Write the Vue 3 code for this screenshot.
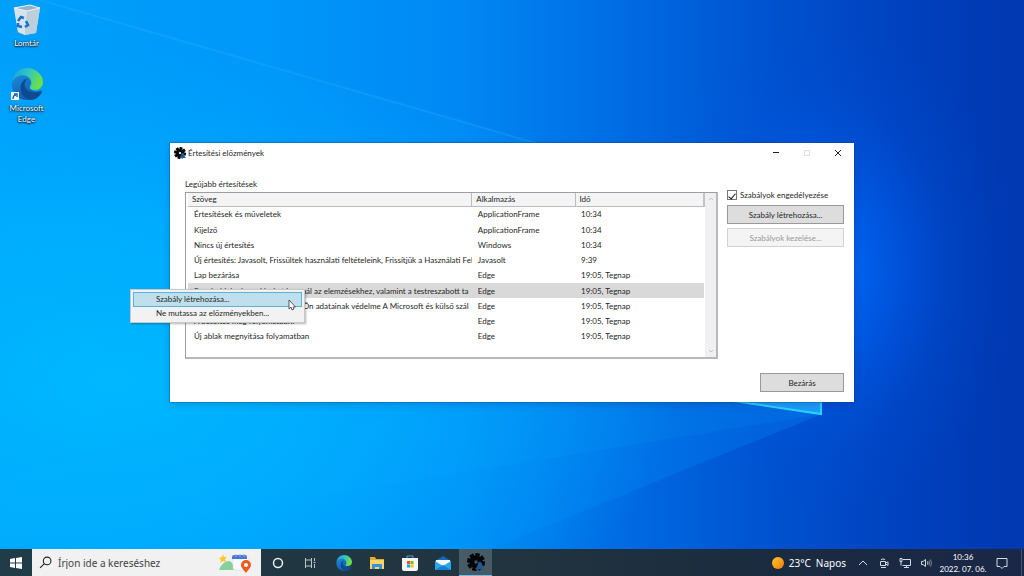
<script setup>
import { ref } from 'vue'

const rows = [
  { text: 'Értesítések és műveletek', app: 'ApplicationFrame', time: '10:34' },
  { text: 'Kijelző', app: 'ApplicationFrame', time: '10:34' },
  { text: 'Nincs új értesítés', app: 'Windows', time: '10:34' },
  { text: 'Új értesítés: Javasolt, Frissültek használati feltételeink, Frissítjük a Használati Fel', app: 'Javasolt', time: '9:39' },
  { text: 'Lap bezárása', app: 'Edge', time: '19:05, Tegnap' },
  { text: 'E weboldalunk cookie-kat használ az elemzésekhez, valamint a testreszabott ta', app: 'Edge', time: '19:05, Tegnap', selected: true },
  { text: 'Számunkra rendkívül fontos az Ön adatainak védelme A Microsoft és külső szál', app: 'Edge', time: '19:05, Tegnap' },
  { text: 'A betöltés még folyamatban.', app: 'Edge', time: '19:05, Tegnap' },
  { text: 'Új ablak megnyitása folyamatban', app: 'Edge', time: '19:05, Tegnap' },
]
const rulesEnabled = ref(true)
const query = ref('')
const teeth = [0, 45, 90, 135, 180, 225, 270, 315]
</script>

<template>
  <div class="screen">
    <svg width="0" height="0" class="defs" aria-hidden="true">
      <defs>
        <linearGradient id="eTeal" x1="0" y1="0" x2="1" y2="0.3">
          <stop offset="0" stop-color="#1a9fe0" />
          <stop offset="0.5" stop-color="#2cc3c8" />
          <stop offset="1" stop-color="#6be04a" />
        </linearGradient>
        <linearGradient id="eBlue" x1="0" y1="0" x2="0.6" y2="1">
          <stop offset="0" stop-color="#1b8fdf" />
          <stop offset="1" stop-color="#1255a8" />
        </linearGradient>
        <symbol id="edge" viewBox="0 0 32 32">
          <path d="M1 15C2 7 8 4 14 6c5 2 7 6 6 9-1 2-2 3-1 5 2 4 8 5 12 2-3 6-9 10-15 10C7 32 0 24 1 15Z" fill="url(#eBlue)" />
          <path d="M10 17c-2 6 2 14 10 15 5 0 9-4 11-8 0-1-1-1-2-1-6 3-13 1-15-4-1-3 0-6 2-8-3 0-5 3-6 6Z" fill="#0d4a92" />
          <path d="M1 14C2 6 8 0 16 0c9 0 16 7 16 14 0 5-4 8-8 8-3 0-6-1-5-3 2-2 2-5 0-8C15 5 5 6 1 14Z" fill="url(#eTeal)" />
        </symbol>
        <symbol id="gear" viewBox="0 0 32 32">
          <g fill="#050608">
            <rect v-for="a in teeth" :key="a" x="12" y="0" width="8" height="8" :transform="`rotate(${a + 12} 16 16)`" />
          </g>
          <circle cx="16" cy="16" r="7" fill="none" stroke="#050608" stroke-width="8" />
          <path d="M20 17c-1 6-2 8-6 12h18c-4-3-4-6-5-9-1-4-5-6-7-3Z" fill="#1f5b93" />
        </symbol>
      </defs>
    </svg>

    <main class="desktop">
      <svg class="wallpaper" viewBox="0 0 1024 549" preserveAspectRatio="none" aria-hidden="true">
        <defs>
          <linearGradient id="base" x1="0" y1="0" x2="1" y2="0">
            <stop offset="0" stop-color="#00a0fa" />
            <stop offset="0.25" stop-color="#0098fa" />
            <stop offset="0.45" stop-color="#0088f4" />
            <stop offset="0.6" stop-color="#006de4" />
            <stop offset="0.75" stop-color="#0052d0" />
            <stop offset="0.88" stop-color="#0041bf" />
            <stop offset="1" stop-color="#0038b0" />
          </linearGradient>
          <radialGradient id="cyan" gradientUnits="userSpaceOnUse" cx="0" cy="0" r="1" gradientTransform="translate(120 380) scale(560 330)">
            <stop offset="0" stop-color="#00b9ff" />
            <stop offset="0.5" stop-color="#00b2ff" stop-opacity="0.7" />
            <stop offset="1" stop-color="#00a8ff" stop-opacity="0" />
          </radialGradient>
          <radialGradient id="glow" gradientUnits="userSpaceOnUse" cx="0" cy="0" r="1" gradientTransform="translate(825 270) scale(190 250)">
            <stop offset="0" stop-color="#0070ff" stop-opacity="0.9" />
            <stop offset="0.35" stop-color="#0064f5" stop-opacity="0.55" />
            <stop offset="0.7" stop-color="#0058e4" stop-opacity="0.15" />
            <stop offset="1" stop-color="#0050d8" stop-opacity="0" />
          </radialGradient>
          <linearGradient id="beam" x1="0" y1="0" x2="1" y2="0">
            <stop offset="0" stop-color="#00a8ff" stop-opacity="0" />
            <stop offset="1" stop-color="#0090ff" stop-opacity="0.45" />
          </linearGradient>
        </defs>
        <rect width="1024" height="549" fill="url(#base)" />
        <rect width="1024" height="549" fill="url(#cyan)" />
        <rect width="1024" height="549" fill="url(#glow)" />
        <path d="M40 0 822 226V414L490 549H0V0Z" fill="url(#beam)" opacity="0.6" />
        <path d="M40 0 640 173" stroke="#38b4ff" stroke-width="2" opacity="0.25" />
        <path d="M0 470 520 402H822V414L0 549Z" fill="#08b4ff" opacity="0.1" />
        <path d="M660 390 822 414V300H660Z" fill="#1e9cfa" />
        <path d="M660 390 821 414V300" fill="none" stroke="#27d5fb" stroke-width="2" />
      </svg>

      <nav class="shortcuts">
        <button class="shortcut" type="button">
          <svg class="bin" viewBox="0 0 28 32" aria-hidden="true">
            <path d="M1 4 17 1l10 3-4 25-11 2-7-3Z" fill="#b9d3e5" />
            <path d="M1 4 14 7l-2 24-7-3Z" fill="#d5e3ec" />
            <path d="M14 7 27 4l-4 25-11 2Z" fill="#bccfdb" />
            <path d="M1 4 17 1l10 3-13 3Z" fill="#94b3ca" stroke="#e8f2f8" />
            <path d="m5 17 3-4 3 1M13 17l2 4-3 2M9 23l-4-1v-3" fill="none" stroke="#1b73c9" stroke-width="2.6" />
          </svg>
          <span>Lomtár</span>
        </button>
        <button class="shortcut" type="button">
          <svg class="edge-big" viewBox="0 0 34 34" aria-hidden="true">
            <use href="#edge" x="1" y="1" width="32" height="32" />
            <rect x="1" y="25" width="8" height="8" fill="#f5f9fc" />
            <path d="M3 32c0-3 1-4 3-4M4 27h3v3" fill="none" stroke="#1a5fb8" stroke-width="1.4" />
          </svg>
          <span>Microsoft Edge</span>
        </button>
      </nav>

      <section class="window" aria-label="Értesítési előzmények">
        <header class="titlebar">
          <svg class="app-icon" aria-hidden="true"><use href="#gear" /></svg>
          <h1>Értesítési előzmények</h1>
          <button type="button" aria-label="Kis méret"><svg viewBox="0 0 8 8"><path d="M1 3.500h6" /></svg></button>
          <button type="button" aria-label="Teljes méret" disabled><svg viewBox="0 0 8 8"><path d="M1.500 1.500h5v5h-5Z" /></svg></button>
          <button type="button" aria-label="Ablak bezárása"><svg viewBox="0 0 8 8"><path d="m1 1 6 6M7 1 1 7" /></svg></button>
        </header>
        <div class="content">
          <div class="history">
            <h2>Legújabb értesítések</h2>
            <div class="listbox">
              <table>
                <colgroup><col class="c-text" /><col class="c-app" /><col class="c-time" /></colgroup>
                <thead>
                  <tr><th>Szöveg</th><th>Alkalmazás</th><th>Idő</th></tr>
                </thead>
                <tbody>
                  <tr v-for="(r, i) in rows" :key="i" :class="{ selected: r.selected }">
                    <td>{{ r.text }}</td><td>{{ r.app }}</td><td>{{ r.time }}</td>
                  </tr>
                </tbody>
              </table>
              <div class="scroll" aria-hidden="true">
                <svg viewBox="0 0 6 4"><path d="m1 3 2-2 2 2" /></svg>
                <svg viewBox="0 0 6 4"><path d="m1 1 2 2 2-2" /></svg>
              </div>
            </div>
          </div>
          <div class="side">
            <label class="check">
              <input v-model="rulesEnabled" type="checkbox" />
              <span>Szabályok engedélyezése</span>
            </label>
            <button class="btn" type="button">Szabály létrehozása...</button>
            <button class="btn" type="button" disabled>Szabályok kezelése...</button>
            <button class="btn close" type="button">Bezárás</button>
          </div>
        </div>

        <div class="menu" role="menu">
          <button class="active" type="button" role="menuitem">Szabály létrehozása...</button>
          <button type="button" role="menuitem">Ne mutassa az előzményekben...</button>
          <svg class="cursor" viewBox="0 0 8 12" aria-hidden="true"><path d="M1 1v9l2-2 1 3 2-1-1-2h2.500Z" /></svg>
        </div>
      </section>
    </main>

    <footer class="taskbar">
      <button class="start" type="button" aria-label="Start">
        <svg viewBox="0 0 12 12"><path d="M0 2 5 1v4.500H0ZM6 1l6-1v5.500H6ZM0 6.500h5V11L0 10ZM6 6.500h6V12l-6-1Z" fill="#fff" /></svg>
      </button>
      <div class="search">
        <svg class="lens" viewBox="0 0 12 12" aria-hidden="true"><circle cx="7.500" cy="4.500" r="3.500" /><path d="M5 7 1 11" /></svg>
        <input v-model="query" type="text" placeholder="Írjon ide a kereséshez" aria-label="Keresés" />
        <svg class="travel" viewBox="0 0 34 20" aria-hidden="true">
          <path d="M1 17c2-6 7-9 10-9 3 0 5 6 7 9Z" fill="#86d19b" />
          <path d="m5 1 1 3 3 0-2 2 1 3-3-1-3 2 1-3-2-2 3-1Z" fill="#ffc62b" />
          <rect x="15" y="3" width="16" height="14" rx="2" fill="#f8f9fb" stroke="#d5d8df" stroke-width="0.500" />
          <path d="M14 6V4q0-2 2-2h11q2 0 2 2v2Z" fill="#4877d6" />
          <path d="M18 1v3M22 1v3M26 1v3" stroke="#8eb0f2" />
          <path d="M28 20c-4-5-5-6-5-8a5 5 0 0 1 10 0c0 2-2 4-5 8Z" fill="#f05a1a" />
          <circle cx="28" cy="12" r="2" fill="#fff" />
        </svg>
      </div>
      <nav class="apps">
        <button type="button" aria-label="Cortana"><svg class="i12" viewBox="0 0 12 12"><circle cx="6" cy="6" r="4.500" fill="none" stroke="#eef2f3" stroke-width="1.500" /></svg></button>
        <button type="button" aria-label="Feladatnézet"><svg class="i12" viewBox="0 0 12 12"><path d="M0.500 1v2h6V1M0.500 11V9h6v2M0.500 3v6M6.500 3v6M9.500 1v3M9.500 7v4M8.500 5.500h2" fill="none" stroke="#bcc6c9" /></svg></button>
        <button type="button" aria-label="Microsoft Edge"><svg class="i16"><use href="#edge" /></svg></button>
        <button type="button" aria-label="Fájlkezelő">
          <svg class="i16" viewBox="0 0 16 16"><path d="M1 2h5l1 2h8v10H1Z" fill="#e9a92c" /><path d="M1 5h14v9H1Z" fill="#ffd467" /><path d="M3 14V9h10v5h-3v-2H6v2Z" fill="#3b8fdf" /></svg>
        </button>
        <button type="button" aria-label="Microsoft Store">
          <svg class="i16" viewBox="0 0 16 16"><path d="M5 4V1h6v3" fill="none" stroke="#43a5dc" /><path d="M0 3h16v11q0 2-2 2H2q-2 0-2-2Z" fill="#f4f6f8" /><path d="M5 6h3v3H5Z" fill="#f25022" /><path d="M8.500 6h3v3h-3Z" fill="#7fba00" /><path d="M5 9.500h3v3H5Z" fill="#00a4ef" /><path d="M8.500 9.500h3v3h-3Z" fill="#ffb900" /></svg>
        </button>
        <button type="button" aria-label="Posta">
          <svg class="i16" viewBox="0 0 16 16"><path d="m0 6 8-5 8 5v9H0Z" fill="#1268b8" /><path d="M1 5h14v4l-7 4-7-4Z" fill="#f2f8fc" /><path d="m0 6 8 5 8-5v9H0Z" fill="#2aa8ec" /><path d="m0 15 8-5 8 5Z" fill="#1683d2" /></svg>
        </button>
        <button class="current" type="button" aria-label="Értesítési előzmények"><svg class="i18"><use href="#gear" /></svg></button>
      </nav>
      <div class="tray">
        <button class="weather" type="button"><i></i><span>23°C</span><span>Napos</span></button>
        <button type="button" aria-label="Rejtett ikonok"><svg class="i10" viewBox="0 0 10 10"><path d="m1 7 4-4 4 4" /></svg></button>
        <button type="button" aria-label="Értekezlet"><svg class="i10" viewBox="0 0 10 10"><path d="M1.500 3.500h5v4h-5ZM6.500 5l2.500-1v3.500L6.500 6M2 1.500q2-1 4 0M2 9.500h5" /></svg></button>
        <button type="button" aria-label="Hálózat"><svg class="i12" viewBox="0 0 12 12"><path d="M3.500 2.500h8v6h-8M1 1.500h2v3H1ZM2 4.500v4M5 10.500h5M7.500 8.500v2" /></svg></button>
        <button type="button" aria-label="Hangerő"><svg class="i12" viewBox="0 0 12 12"><path d="M1.500 4.500h1.500l2.500-2v7L3 7.500H1.500ZM7.500 4.500q1 1.500 0 3" /><path d="M9 3.500q1.500 2.500 0 5M10.500 2.500q2 3.500 0 7" opacity="0.500" /></svg></button>
        <button class="clock" type="button"><time>10:36</time><time>2022. 07. 06.</time></button>
        <button class="notes" type="button" aria-label="Értesítések"><svg class="i12" viewBox="0 0 12 12"><path d="M1 1.500h10v8H8l-2 2-2-2H1Z" /></svg></button>
      </div>
    </footer>
  </div>
</template>

<style>
body { margin: 0; }
</style>

<style scoped>
.screen {
  display: flex;
  flex-direction: column;
  height: 100vh;
  overflow: hidden;
  font-family: Lato, "Noto Sans", sans-serif;
  font-size: 8px;
  line-height: 12px;
  color: #262626;
}
.screen * { box-sizing: border-box; }
.defs { position: absolute; }
button {
  font: inherit;
  color: inherit;
  border: 0;
  margin: 0;
  padding: 0;
  background: none;
}
.desktop {
  position: relative;
  flex: 1;
  display: flex;
  align-items: center;
  justify-content: center;
  padding-bottom: 4px;
}
.wallpaper { position: absolute; inset: 0; width: 100%; height: 100%; }
.shortcuts {
  position: absolute;
  left: 4px;
  top: 4px;
  display: grid;
  gap: 18px;
}
.shortcut {
  width: 45px;
  display: flex;
  flex-direction: column;
  align-items: center;
  gap: 2px;
  color: #fff;
  line-height: 11px;
  text-shadow: 0 1px 2px #000, 0 0 2px #000;
}
.bin { width: 28px; height: 32px; }
.edge-big { width: 34px; height: 34px; }

.window {
  position: relative;
  width: 66.8%;
  background: #fff;
  box-shadow: 0 0 0 1px rgba(0, 70, 130, 0.3), 0 2px 8px rgba(0, 20, 80, 0.2);
}
.titlebar { display: flex; align-items: center; height: 20px; padding: 0 1px 0 4px; }
.titlebar h1 { flex: 1; margin: 0; font: inherit; }
.app-icon { width: 12px; height: 12px; margin-right: 2px; }
.titlebar button { width: 31px; height: 20px; display: grid; place-items: center; }
.titlebar svg:not(.app-icon) { width: 8px; height: 8px; fill: none; stroke: #222; }
.titlebar button:disabled svg { stroke: #ddd; }
.content { display: flex; gap: 9px; padding: 15px 10px 10px 15px; }
.history { flex: 1; min-width: 0; padding-bottom: 33px; }
h2 { margin: 0 0 2px; font: inherit; }
.listbox {
  display: flex;
  border: 1px solid #9a9ea6;
  border-right: 2px solid #b6b8be;
  border-bottom: 2px solid #b6b8be;
  height: 167px;
  padding-left: 2px;
}
table { flex: 1; width: 0; min-width: 0; height: 151px; table-layout: fixed; border-collapse: collapse; }
.c-text { width: 55%; }
.c-app { width: 20%; }
.c-time { width: 25%; }
th, td { padding: 0 0 0 6px; font-weight: 400; text-align: left; white-space: nowrap; overflow: hidden; }
th { height: 13px; padding-left: 4px; background: #f4f4f5; border-right: 1px solid #b9bcc1; border-bottom: 1px solid #b9bcc1; }
th:last-child { border-right: 2px solid #c0c2c6; }
.selected { background: #d9d9d9; }
.scroll {
  width: 11px;
  background: #f0f0f0;
  display: flex;
  flex-direction: column;
  justify-content: space-between;
  align-items: center;
  padding: 4px 0;
}
.scroll svg { width: 6px; height: 4px; fill: none; stroke: #c4c4c4; }
.side { width: 117px; display: flex; flex-direction: column; padding-top: 11px; }
.check { display: flex; align-items: center; gap: 3px; white-space: nowrap; margin-bottom: 4px; }
.check input {
  appearance: none;
  flex: none;
  width: 10px;
  height: 10px;
  margin: 0;
  border: 1px solid #777;
  background: #fff;
  display: grid;
  place-items: center;
}
.check input:checked::after {
  content: "";
  width: 3px;
  height: 6px;
  border: solid #111;
  border-width: 0 1px 1px 0;
  transform: rotate(40deg);
}
.btn { height: 19px; background: #ddd; border: 1px solid #999; margin-bottom: 4px; }
.btn:disabled { background: #f4f4f4; border-color: #d2d2d2; color: #999; }
.btn.close { width: 84px; align-self: flex-end; margin: auto 0 0; }

.menu {
  position: absolute;
  left: -40px;
  top: 146px;
  width: 175px;
  padding: 2px;
  background: #f2f2f2;
  border: 1px solid #c8c8c8;
  box-shadow: 1px 1px 2px rgba(0, 0, 0, 0.3);
}
.menu button { display: block; width: 100%; line-height: 13px; padding-left: 23px; text-align: left; white-space: nowrap; }
.menu .active { padding-left: 22px; background: #bfdfec; border: 1px solid #59b4da; }
.cursor { position: absolute; left: 157px; top: 9px; width: 8px; height: 12px; fill: #fff; stroke: #333; stroke-width: 0.8; }

.taskbar {
  position: relative;
  display: flex;
  height: 27px;
  background: linear-gradient(90deg, #203c48, #21343f 50%, #1b2b3f 75%, #1a2747);
}
.taskbar button { display: grid; place-items: center; }
.start { width: 32px; }
.start svg { width: 12px; height: 12px; }
.search { width: 229px; display: flex; align-items: center; padding: 0 9px 0 7px; background: #f1f1f1; }
.lens { width: 13px; height: 13px; fill: none; stroke: #222; }
.search input {
  flex: 1;
  min-width: 0;
  border: 0;
  padding: 0 0 0 6px;
  background: none;
  outline: 0;
  font: inherit;
  font-family: "Noto Sans", sans-serif;
  font-size: 10px;
}
.search input::placeholder { color: #444; opacity: 1; }
.travel { width: 34px; height: 20px; }
.apps { display: flex; }
.apps button { width: 33px; }
.apps .current { background: #475b65; border-bottom: 1px solid #76b9ed; }
.i10 { width: 10px; height: 10px; }
.i12 { width: 12px; height: 12px; }
.i16 { width: 16px; height: 16px; }
.i18 { width: 18px; height: 18px; }
.tray { margin: 0 2px 0 auto; display: flex; color: #fff; padding-right: 7px; border-right: 1px solid #46536c; }
.tray svg { fill: none; stroke: #d5dae0; }
.tray button { width: 21px; }
.tray .weather { width: auto; display: flex; align-items: center; gap: 5px; font-family: "Noto Sans", sans-serif; font-size: 10px; margin-right: 6px; }
.weather i { width: 12px; height: 12px; border-radius: 50%; background: linear-gradient(135deg, #ffc42e, #f37d0c); }
.tray .clock { width: 54px; align-content: center; white-space: nowrap; }
.tray .notes { width: 24px; }
</style>
